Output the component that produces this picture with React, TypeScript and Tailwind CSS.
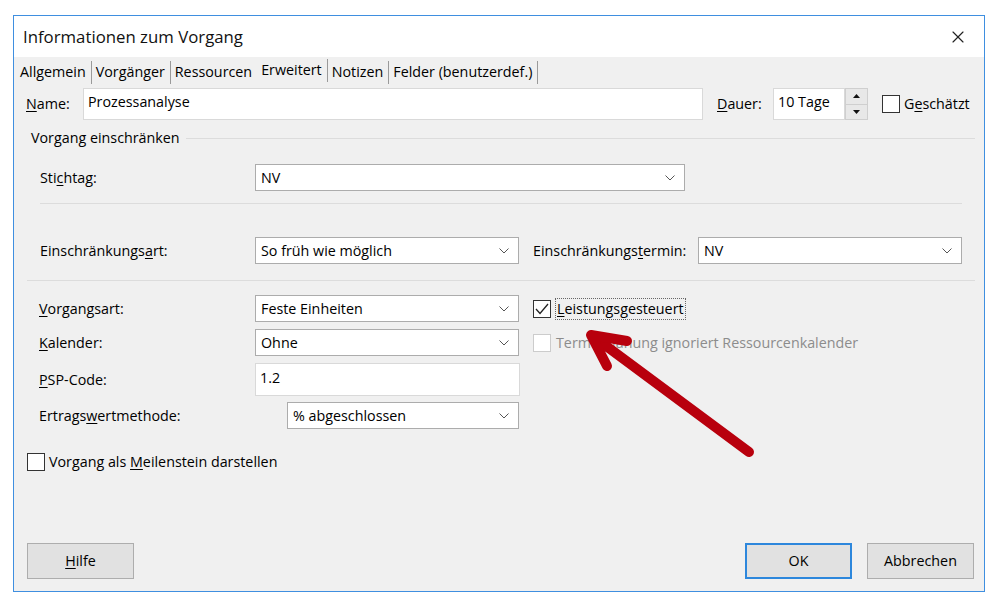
import { X } from "lucide-react"

const FONT = { fontFamily: '"Open Sans", "Noto Sans", sans-serif' }

function U({ children }: { children: string }) {
  return <span className="underline underline-offset-2 decoration-1">{children}</span>
}

function Select({ value, w }: { value: string; w: string }) {
  return (
    <div className={`${w} h-[27px] bg-white border border-[#acacac] flex items-center justify-between pl-[5px] pr-[9px]`}>
      <span className="text-black">{value}</span>
      <svg width="10" height="6" viewBox="0 0 10 6">
        <path d="M0.5 0.5 L5 5 L9.5 0.5" fill="none" stroke="#555" strokeWidth="1" />
      </svg>
    </div>
  )
}

function Check({ checked, disabled }: { checked?: boolean; disabled?: boolean }) {
  return (
    <div
      className={`w-[18px] h-[18px] bg-white border shrink-0 flex items-center justify-center ${
        disabled ? "border-[#cccccc]" : "border-[#333333]"
      }`}
    >
      {checked && (
        <svg width="14" height="12" viewBox="0 0 14 12">
          <path d="M1 6 L5 10.5 L13 1" fill="none" stroke="#222" strokeWidth="1.3" />
        </svg>
      )}
    </div>
  )
}

const tabs = ["Allgemein", "Vorgänger", "Ressourcen", "Erweitert", "Notizen", "Felder (benutzerdef.)"]

export default function App() {
  return (
    <div className="relative w-[1000px] h-[605px] bg-white pt-[15px] pl-[13px] text-[14.3px] text-black" style={FONT}>
      <div className="w-[972px] h-[577px] border border-[#3f8fe0] bg-[#f0f0f0] flex flex-col">
        {/* Title bar */}
        <div className="h-[41px] bg-white flex items-center justify-between pl-[9px] pr-[16px] shrink-0">
          <span className="text-[16.8px] text-[#111]">Informationen zum Vorgang</span>
          <X size={20} strokeWidth={1.4} className="text-[#222]" />
        </div>

        {/* Tabs */}
        <div className="h-[29px] flex items-center pl-[2px] shrink-0">
          {tabs.map((t) => {
            const sel = t === "Erweitert"
            const noBorder = t === "Ressourcen"
            return (
              <div
                key={t}
                className={`pl-[4px] pr-[5px] h-[23px] flex items-center ${noBorder ? "" : "border-r border-[#9a9a9a]"} ${
                  sel ? "-mt-[3px]" : "mt-[1px]"
                }`}
              >
                {t}
              </div>
            )
          })}
        </div>

        {/* Name row */}
        <div className="mt-[2px] h-[32px] flex items-center pl-[12px] shrink-0">
          <span className="w-[57px]">
            <U>N</U>ame:
          </span>
          <div className="w-[620px] h-[32px] bg-white border border-[#d9d9d9] pl-[4px] pt-[2px]">Prozessanalyse</div>
          <span className="ml-[14px] w-[56px]">
            <U>D</U>auer:
          </span>
          <div className="w-[72px] h-[32px] bg-white border border-[#d9d9d9] pl-[4px] pt-[2px]">10 Tage</div>
          <div className="w-[23px] h-[32px] flex flex-col">
            <div className="flex-1 border border-[#cfcfcf] bg-[#e8e8e8] flex items-center justify-center">
              <svg width="7" height="4" viewBox="0 0 7 4">
                <path d="M0 4 L3.5 0 L7 4 Z" fill="#111" />
              </svg>
            </div>
            <div className="flex-1 border border-t-0 border-[#cfcfcf] bg-[#e8e8e8] flex items-center justify-center">
              <svg width="7" height="4" viewBox="0 0 7 4">
                <path d="M0 0 L3.5 4 L7 0 Z" fill="#111" />
              </svg>
            </div>
          </div>
          <div className="ml-[14px] flex items-center gap-[4px]">
            <Check />
            <span>
              G<U>e</U>schätzt
            </span>
          </div>
        </div>

        {/* Group header */}
        <div className="mt-[8px] h-[20px] flex items-center pl-[17px] pr-[9px] gap-[6px] shrink-0">
          <span>Vorgang einschränken</span>
          <div className="flex-1 border-t border-[#dcdcdc]" />
        </div>

        {/* Stichtag */}
        <div className="mt-[16px] flex items-center pl-[26px] shrink-0">
          <span className="w-[215px]">
            Sti<U>c</U>htag:
          </span>
          <Select value="NV" w="w-[430px]" />
        </div>

        <div className="mt-[12px] ml-[26px] w-[922px] border-t border-[#dcdcdc] shrink-0" />

        {/* Einschränkung */}
        <div className="mt-[33px] flex items-center pl-[26px] shrink-0">
          <span className="w-[215px]">
            Einschränkungs<U>a</U>rt:
          </span>
          <Select value="So früh wie möglich" w="w-[264px]" />
          <span className="ml-[14px] w-[165px]">
            Einschränkungs<U>t</U>ermin:
          </span>
          <Select value="NV" w="w-[264px]" />
        </div>

        <div className="mt-[16px] ml-[13px] w-[948px] border-t border-[#dcdcdc] shrink-0" />

        {/* Vorgangsart etc. */}
        <div className="mt-[14px] flex flex-col pl-[25px] gap-[7px] shrink-0">
          <div className="flex items-center">
            <span className="w-[216px]">
              <U>V</U>organgsart:
            </span>
            <Select value="Feste Einheiten" w="w-[264px]" />
            <div className="ml-[14px] flex items-center gap-[4px]">
              <Check checked />
              <span className="border border-dotted border-[#666] px-[1px] leading-[20px]">
                <U>L</U>eistungsgesteuert
              </span>
            </div>
          </div>
          <div className="flex items-center">
            <span className="w-[216px]">
              <U>K</U>alender:
            </span>
            <Select value="Ohne" w="w-[264px]" />
            <div className="ml-[14px] flex items-center gap-[5px]">
              <Check disabled />
              <span className="text-[#8c8c8c]">Terminplanung ignoriert Ressourcenkalender</span>
            </div>
          </div>
          <div className="flex items-center">
            <span className="w-[216px]">
              <U>P</U>SP-Code:
            </span>
            <div className="w-[265px] h-[33px] bg-white border border-[#d9d9d9] pl-[4px] pt-[3px]">1.2</div>
          </div>
          <div className="flex items-center -mt-[1px]">
            <span className="w-[248px]">
              Ertrags<U>w</U>ertmethode:
            </span>
            <Select value="% abgeschlossen" w="w-[232px]" />
          </div>
        </div>

        <div className="mt-[22px] ml-[13px] flex items-center gap-[4px] shrink-0">
          <Check />
          <span>
            Vorgang als <U>M</U>eilenstein darstellen
          </span>
        </div>

        <div className="flex-1" />

        {/* Buttons */}
        <div className="flex items-center pl-[13px] pr-[10px] pb-[12px] shrink-0">
          <button className="w-[107px] h-[36px] bg-[#e1e1e1] border border-[#adadad]">
            <U>H</U>ilfe
          </button>
          <div className="flex-1" />
          <button className="w-[107px] h-[36px] bg-[#e1e1e1] border-2 border-[#2d87dc]">OK</button>
          <button className="ml-[15px] w-[107px] h-[36px] bg-[#e1e1e1] border border-[#adadad]">Abbrechen</button>
        </div>
      </div>

      {/* Red annotation arrow */}
      <svg className="absolute inset-0 pointer-events-none" width="1000" height="605" viewBox="0 0 1000 605">
        <g stroke="#b8000d" strokeWidth="10" strokeLinecap="round" strokeLinejoin="round" fill="none">
          <line x1="749" y1="452" x2="594" y2="337" />
          <polyline points="627,341 591,335 607,366" />
        </g>
      </svg>
    </div>
  )
}
